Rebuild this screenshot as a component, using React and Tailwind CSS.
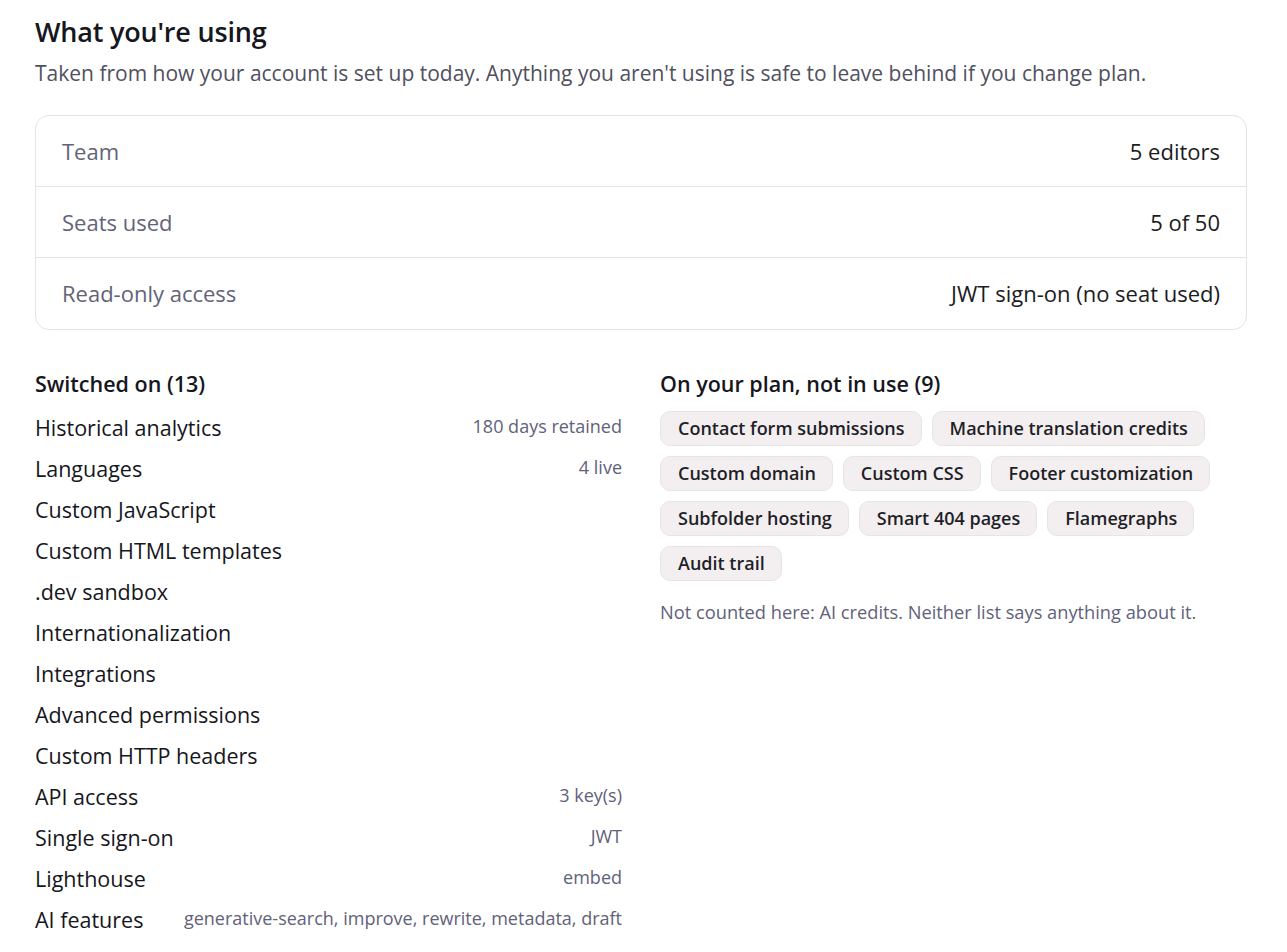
import React from "react";

const usage = [
  { label: "Team", value: "5 editors" },
  { label: "Seats used", value: "5 of 50" },
  { label: "Read-only access", value: "JWT sign-on (no seat used)" },
];

const switchedOn = [
  { name: "Historical analytics", note: "180 days retained" },
  { name: "Languages", note: "4 live" },
  { name: "Custom JavaScript" },
  { name: "Custom HTML templates" },
  { name: ".dev sandbox" },
  { name: "Internationalization" },
  { name: "Integrations" },
  { name: "Advanced permissions" },
  { name: "Custom HTTP headers" },
  { name: "API access", note: "3 key(s)" },
  { name: "Single sign-on", note: "JWT" },
  { name: "Lighthouse", note: "embed" },
  { name: "AI features", note: "generative-search, improve, rewrite, metadata, draft" },
];

const unused = [
  "Contact form submissions",
  "Machine translation credits",
  "Custom domain",
  "Custom CSS",
  "Footer customization",
  "Subfolder hosting",
  "Smart 404 pages",
  "Flamegraphs",
  "Audit trail",
];

export default function App() {
  return (
    <div
      className="min-h-screen bg-white text-[#16161d]"
      style={{ fontFamily: "'Open Sans', 'Liberation Sans', sans-serif" }}
    >
      <div className="w-[1212px] ml-[35px] pt-[14px] pb-6">
        <h2 className="text-[27px] leading-[36px] font-semibold tracking-[-0.2px]">What you're using</h2>
        <p className="mt-[9px] text-[21px] leading-[28px] text-[#50505e]">
          Taken from how your account is set up today. Anything you aren't using is safe to leave behind if you change plan.
        </p>

        {/* account summary */}
        <div className="mt-[28px] rounded-[14px] border border-[#e7e2e5] divide-y divide-[#e7e2e5]">
          {usage.map((row) => (
            <div key={row.label} className="h-[71px] px-[26px] flex items-center justify-between text-[22px]">
              <span className="text-[#636377]">{row.label}</span>
              <span className="text-[#1b1b22]">{row.value}</span>
            </div>
          ))}
        </div>

        <div className="mt-[40px] grid grid-cols-2 gap-[38px]">
          {/* features in use */}
          <div>
            <h3 className="text-[21.5px] leading-[28px] font-semibold">Switched on ({switchedOn.length})</h3>
            <ul className="mt-[16px]">
              {switchedOn.map((f) => (
                <li key={f.name} className="h-[41px] flex items-start justify-between gap-6">
                  <span className="text-[21.5px] leading-[28px] whitespace-nowrap">{f.name}</span>
                  {f.note && (
                    <span className="text-[18px] leading-[24px] text-[#61617a] whitespace-nowrap">{f.note}</span>
                  )}
                </li>
              ))}
            </ul>
          </div>

          {/* features on plan but idle */}
          <div>
            <h3 className="text-[21.5px] leading-[28px] font-semibold">On your plan, not in use ({unused.length})</h3>
            <div className="mt-[13px] flex flex-wrap gap-x-[10px] gap-y-[10px]">
              {unused.map((c) => (
                <span
                  key={c}
                  className="h-[35px] pl-[17px] pr-[16px] flex items-center rounded-[10px] border border-[#e9e3e6] bg-[#f3eff1] text-[18px] font-semibold text-[#1f1f27]"
                >
                  {c}
                </span>
              ))}
            </div>
            <p className="mt-[17px] text-[18.25px] text-[#61617a]">
              Not counted here: AI credits. Neither list says anything about it.
            </p>
          </div>
        </div>
      </div>
    </div>
  );
}
